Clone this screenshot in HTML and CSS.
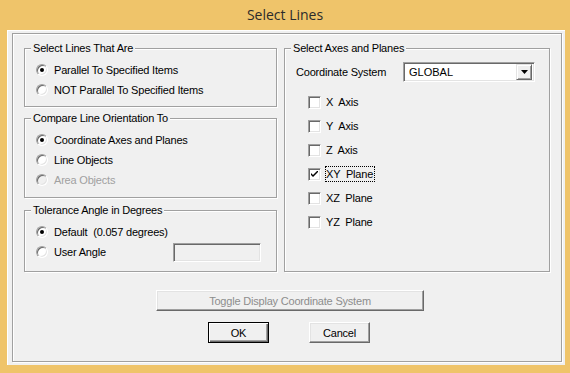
FILE: index.html
```html
<!DOCTYPE html>
<html lang="en">
<head>
  <meta charset="UTF-8">
  <title>Select Lines</title>
  <link rel="stylesheet" href="styles.css">
</head>
<body>
  <div class="titlebar">Select Lines</div>
  <div class="client">
    <div class="frame">
      <div class="columns">
        <div class="left-col">
          <div class="group group-select">
            <div class="group-title">Select Lines That Are</div>
            <div class="row"><span class="radio checked"></span><span class="text">Parallel To Specified Items</span></div>
            <div class="row"><span class="radio"></span><span class="text">NOT Parallel To Specified Items</span></div>
          </div>
          <div class="group group-compare">
            <div class="group-title">Compare Line Orientation To</div>
            <div class="row"><span class="radio checked"></span><span class="text">Coordinate Axes and Planes</span></div>
            <div class="row"><span class="radio"></span><span class="text">Line Objects</span></div>
            <div class="row disabled"><span class="radio"></span><span class="text">Area Objects</span></div>
          </div>
          <div class="group group-tolerance">
            <div class="group-title">Tolerance Angle in Degrees</div>
            <div class="row"><span class="radio checked"></span><span class="text">Default&nbsp; (0.057 degrees)</span></div>
            <div class="row"><span class="radio"></span><span class="text">User Angle</span><span class="angle-input"></span></div>
          </div>
        </div>
        <div class="group group-axes">
          <div class="group-title">Select Axes and Planes</div>
          <div class="coord-row">
            <span class="coord-label">Coordinate System</span>
            <div class="combo">
              <span class="combo-value">GLOBAL</span>
              <span class="combo-btn">
                <svg width="7" height="4" viewBox="0 0 7 4"><polygon points="0,0 7,0 3.5,4" fill="#000"/></svg>
              </span>
            </div>
          </div>
          <div class="checks">
            <div class="check-row"><span class="checkbox"></span><span class="text">X&nbsp; Axis</span></div>
            <div class="check-row"><span class="checkbox"></span><span class="text">Y&nbsp; Axis</span></div>
            <div class="check-row"><span class="checkbox"></span><span class="text">Z&nbsp; Axis</span></div>
            <div class="check-row">
              <span class="checkbox">
                <svg width="7" height="7" viewBox="0 0 7 7"><path d="M0 2 L2 4 L7 -1 L7 1 L2 6 L0 4 Z" fill="#000"/></svg>
              </span>
              <span class="text focus">XY&nbsp; Plane</span>
            </div>
            <div class="check-row"><span class="checkbox"></span><span class="text">XZ&nbsp; Plane</span></div>
            <div class="check-row"><span class="checkbox"></span><span class="text">YZ&nbsp; Plane</span></div>
          </div>
        </div>
      </div>
      <button class="btn btn-toggle" disabled>Toggle Display Coordinate System</button>
      <div class="actions">
        <button class="btn btn-default">OK</button>
        <button class="btn">Cancel</button>
      </div>
    </div>
  </div>
</body>
</html>
```

FILE: styles.css
```css
body {
  margin: 0;
  width: 570px;
  height: 373px;
  overflow: hidden;
  background: #efc46a;
  font-family: "Liberation Sans", Arial, sans-serif;
  font-size: 11px;
  letter-spacing: -0.2px;
  color: #000;
}

.titlebar {
  height: 30px;
  line-height: 30px;
  text-align: center;
  font-family: "Open Sans", "Noto Sans", sans-serif;
  font-size: 14px;
  letter-spacing: 0;
  color: #2b2b2b;
}

.client {
  margin: 0 5px 0 7px;
  height: 335px;
  box-sizing: border-box;
  padding: 3px 3px 3px 5px;
  background: #f0f0f0;
  box-shadow: inset 1px 1px 0 #fff;
}

.frame {
  height: 329px;
  box-sizing: border-box;
  border: 1px solid #a0a0a0;
  box-shadow: inset 1px 1px 0 #fff, 1px 1px 0 #fff;
  padding-top: 14px;
}

.columns {
  display: flex;
  gap: 7px;
  padding-left: 11px;
}

.left-col {
  display: flex;
  flex-direction: column;
  width: 253px;
}

/* etched group boxes */
.group {
  box-sizing: border-box;
  border: 1px solid #a0a0a0;
  box-shadow: inset 1px 1px 0 #fff, 1px 1px 0 #fff;
}
.group-select { height: 59px; }
.group-compare { height: 80px; margin-top: 11px; }
.group-tolerance { height: 62px; margin-top: 12px; }
.group-axes { width: 266px; height: 224px; }

.group-title {
  width: fit-content;
  margin: -7px 0 0 6px;
  padding: 0 2px;
  line-height: 13px;
  background: #f0f0f0;
}

.row {
  display: flex;
  align-items: center;
  height: 20px;
  padding-left: 11px;
}
.group-title + .row { margin-top: 5px; }

.text {
  line-height: 13px;
  white-space: nowrap;
}
.row .text { margin-left: 6px; }
.disabled .text { color: #a0a0a0; }

.radio {
  display: flex;
  align-items: center;
  justify-content: center;
  width: 12px;
  height: 12px;
  box-sizing: border-box;
  border-radius: 50%;
  border: 1px solid;
  border-color: #a0a0a0 #fff #fff #a0a0a0;
  box-shadow: inset 1px 1px 0 #696969, inset -1px -1px 0 #e3e3e3;
  background: #fff;
}
.radio.checked::after {
  content: "";
  width: 4px;
  height: 4px;
  border-radius: 50%;
  background: #000;
}
.disabled .radio { background: #f0f0f0; }

.angle-input {
  width: 88px;
  height: 19px;
  margin-left: auto;
  margin-right: 15px;
  box-sizing: border-box;
  border: 1px solid;
  border-color: #a0a0a0 #fff #fff #a0a0a0;
  box-shadow: inset 1px 1px 0 #696969, inset -1px -1px 0 #e3e3e3;
  background: #f0f0f0;
}

.coord-row {
  display: flex;
  align-items: center;
  margin-top: 7px;
  height: 20px;
  padding-left: 11px;
}
.coord-label { width: 107px; }

.combo {
  display: flex;
  align-items: center;
  width: 132px;
  height: 20px;
  box-sizing: border-box;
  border: 1px solid;
  border-color: #a0a0a0 #fff #fff #a0a0a0;
  box-shadow: inset 1px 1px 0 #696969, inset -1px -1px 0 #e3e3e3;
  background: #fff;
  padding: 2px;
}
.combo-value {
  flex: 1;
  padding-left: 3px;
  font-size: 11px;
  letter-spacing: 0;
}
.combo-btn {
  display: flex;
  align-items: center;
  justify-content: center;
  width: 16px;
  height: 16px;
  box-sizing: border-box;
  border: 1px solid;
  border-color: #e3e3e3 #696969 #696969 #e3e3e3;
  box-shadow: inset 1px 1px 0 #fff, inset -1px -1px 0 #a0a0a0;
  background: #f0f0f0;
}

.checks { margin-top: 8px; }

.check-row {
  display: flex;
  align-items: center;
  height: 24px;
  padding-left: 23px;
}
.check-row .text { margin-left: 5px; }

.checkbox {
  display: flex;
  align-items: center;
  justify-content: center;
  width: 13px;
  height: 13px;
  box-sizing: border-box;
  border: 1px solid;
  border-color: #a0a0a0 #fff #fff #a0a0a0;
  box-shadow: inset 1px 1px 0 #696969, inset -1px -1px 0 #e3e3e3;
  background: #fff;
}

.focus {
  padding: 1px 1px 0 0;
  border: 1px dotted #000;
  margin-left: 4px !important;
}

/* push buttons */
.btn {
  display: block;
  height: 21px;
  box-sizing: border-box;
  padding: 0;
  font-family: inherit;
  font-size: 11px;
  letter-spacing: -0.2px;
  color: #000;
  background: #f0f0f0;
  border: 1px solid;
  border-color: #fff #696969 #696969 #fff;
  box-shadow: inset -1px -1px 0 #a0a0a0, inset 1px 1px 0 #e3e3e3;
  width: 61px;
}
.btn-toggle {
  width: 268px;
  margin: 18px 0 0 143px;
  color: #8d8d8d;
}
.btn-default {
  border-color: #000;
  box-shadow: inset 1px 1px 0 #fff, inset -1px -1px 0 #696969, inset -2px -2px 0 #a0a0a0;
}

.actions {
  display: flex;
  gap: 40px;
  margin-top: 11px;
  padding-left: 195px;
}
```
